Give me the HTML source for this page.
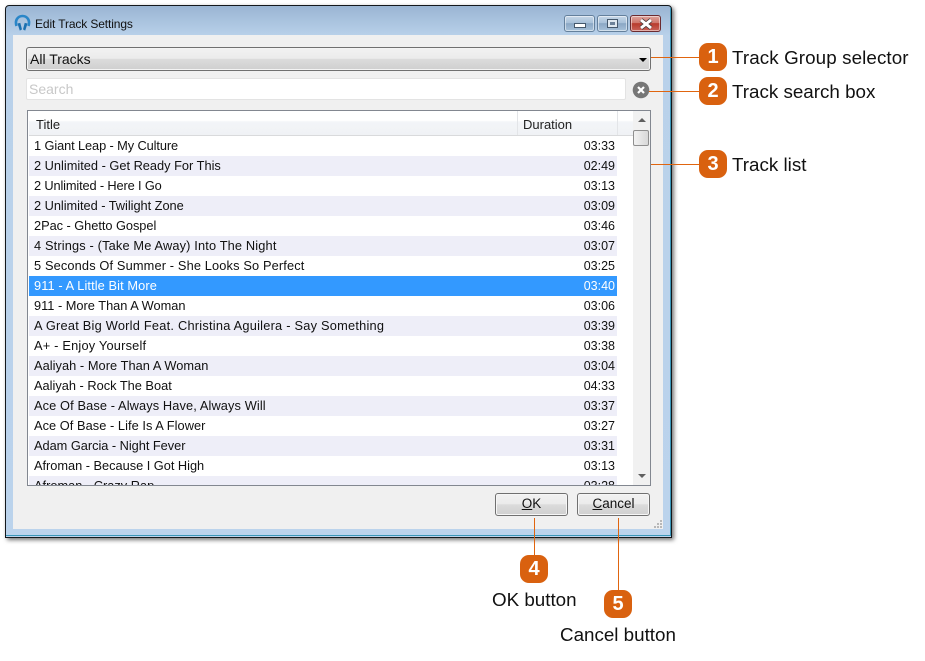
<!DOCTYPE html>
<html><head><meta charset="utf-8"><style>
html,body{margin:0;padding:0;background:#fff}
body{width:925px;height:661px;position:relative;overflow:hidden;font-family:"Liberation Sans",sans-serif;color:#000}
div{position:absolute;box-sizing:border-box}
#win{left:5px;top:5px;width:667px;height:533px;background:linear-gradient(#9ab5d3 0,#b9d1ea 30px,#bbd3ec 100%);border:1px solid #14181c;border-radius:4px 4px 0 0;box-shadow:2px 2px 4px rgba(0,0,0,.55)}
#edge{left:670px;top:8px;width:1px;height:528px;background:#3a96b8}
#edge2{left:6px;top:535px;width:665px;height:1px;background:#3a96b8}
#content{left:13px;top:35px;width:650px;height:494px;background:#f0f0f0}
#title{left:35px;top:16px;font-size:12px;line-height:16px;color:#111;letter-spacing:-.12px}
.wb{top:15px;width:31px;height:17px;border:1px solid #64809c;border-radius:3px;background:linear-gradient(#c6d7e8 0,#a9c1d9 45%,#8aa7c4 50%,#a7c1da 100%);box-shadow:inset 0 0 0 1px rgba(255,255,255,.5)}
#combo{left:26px;top:47px;width:625px;height:24px;border:1px solid #707070;border-radius:3px;background:linear-gradient(#f2f2f2 0,#ebebeb 48%,#dcdcdc 50%,#cfcfcf 100%);box-shadow:inset 0 0 0 1px #f4f4f4}
#combot{left:30px;top:51px;font-size:14px;line-height:16px;color:#111}
#arrow{left:639px;top:58px;width:0;height:0;border-left:4px solid transparent;border-right:4px solid transparent;border-top:4px solid #000}
#search{left:26px;top:78px;width:600px;height:22px;background:#fff;border:1px solid #e3e3e3;border-radius:2px}
#searcht{left:29px;top:81px;font-size:14px;line-height:16px;color:#c8c8c8}
#list{left:27px;top:110px;width:624px;height:376px;background:#fff;border:1px solid #828790;overflow:hidden}
#head{left:1px;top:0;width:605px;height:25px;background:linear-gradient(#fff 0,#fff 40%,#f3f5f8 45%,#f0f2f5 100%);border-bottom:1px solid #d9dadc}
.sep{top:0;width:1px;height:24px;background:#e3e5e8}
.ht{top:6px;font-size:13px;line-height:15px;color:#222}
.r{left:1px;width:588px;height:20px;font-size:12.8px;line-height:19px;color:#111;padding-left:5px;white-space:nowrap}
.r b{font-weight:normal;position:absolute;right:2px;top:1px;font-size:12.5px;letter-spacing:0}
.a{background:#eeeef8}
.s{background:#3399ff;color:#fff}
#sb{left:605px;top:0;width:17px;height:374px;background:#f1f1f1}
#thumb{left:605px;top:19px;width:16px;height:16px;border:1px solid #8f8f8f;border-radius:2px;background:linear-gradient(90deg,#f2f2f2,#d8d8d8)}
.tri{width:0;height:0;left:610px;border-left:4px solid transparent;border-right:4px solid transparent}
.btn{top:493px;width:73px;height:23px;border:1px solid #707070;border-radius:3px;background:linear-gradient(#f2f2f2 0,#ebebeb 48%,#dcdcdc 50%,#cfcfcf 100%);box-shadow:inset 0 0 0 1px #f6f6f6;font-size:13.5px;line-height:20px;text-align:center;color:#111}
.ln{background:#e0650f}
.bd{width:28px;height:28px;border-radius:9px;background:#d9610f;color:#fff;font-weight:bold;font-size:20px;line-height:28px;text-align:center}
.lb{font-size:18.8px;line-height:22px;color:#111;white-space:nowrap}
.grip{width:2px;height:2px;background:#b8b8b8}
</style></head><body>
<div id="win"></div><div id="edge"></div><div id="edge2"></div>
<svg style="position:absolute;left:14px;top:14px" width="18" height="18" viewBox="0 0 18 18"><path d="M2.500 12C0.500 5.500 4.500 2 8.500 2S16.500 5.500 14.500 12" fill="none" stroke="#2a86c8" stroke-width="2.600"/><path d="M3.500 9.500l2.800-.6 1.700 6.500-2.200 1.200zM13.500 9.500l-2.800-.6-1.700 6.500 2.200 1.200z" fill="#1b70b0"/></svg>
<div id="title">Edit Track Settings</div>
<div class="wb" style="left:564px"><div style="left:9px;top:7px;width:12px;height:5px;background:#fff;border:1px solid #45586c"></div></div>
<div class="wb" style="left:597px"><div style="left:9px;top:3px;width:11px;height:9px;background:#dfe8f0;border:1px solid #45586c"><div style="left:2px;top:2px;width:5px;height:3px;background:#6d8299"></div></div></div>
<div class="wb" style="left:630px;border-color:#6b2b30;background:linear-gradient(#dea39c 0,#d0776c 45%,#b83a2c 50%,#c9635a 100%)"><svg style="position:absolute;left:8px;top:2px" width="14" height="12" viewBox="0 0 14 12"><path d="M2 2l10 8M12 2l-10 8" stroke="#4a3a3a" stroke-width="4.600"/><path d="M2 2l10 8M12 2l-10 8" stroke="#fff" stroke-width="3"/></svg></div>
<div id="content"></div>
<div id="combo"></div><div id="combot">All Tracks</div><div id="arrow"></div>
<div id="search"></div><div id="searcht">Search</div>
<svg style="position:absolute;left:632px;top:81px" width="18" height="18" viewBox="0 0 18 18"><circle cx="9" cy="9" r="8.300" fill="#777"/><path d="M6 6l6 6M12 6l-6 6" stroke="#fff" stroke-width="2.200"/></svg>
<div id="list">
<div id="head"></div><div class="sep" style="left:489px"></div><div class="sep" style="left:589px"></div>
<div class="ht" style="left:8px">Title</div><div class="ht" style="left:495px">Duration</div>
<div id="sb"></div><div id="thumb"></div>
<div class="tri" style="top:7px;border-bottom:4px solid #606060"></div>
<div class="tri" style="top:363px;border-top:4px solid #606060"></div>
<div class="r" style="top:25px;letter-spacing:-.1px">1 Giant Leap - My Culture<b>03:33</b></div>
<div class="r a" style="top:45px">2 Unlimited - Get Ready For This<b>02:49</b></div>
<div class="r" style="top:65px;letter-spacing:-.14px">2 Unlimited - Here I Go<b>03:13</b></div>
<div class="r a" style="top:85px;letter-spacing:-.03px">2 Unlimited - Twilight Zone<b>03:09</b></div>
<div class="r" style="top:105px;letter-spacing:-.04px">2Pac - Ghetto Gospel<b>03:46</b></div>
<div class="r a" style="top:125px;letter-spacing:.15px">4 Strings - (Take Me Away) Into The Night<b>03:07</b></div>
<div class="r" style="top:145px;letter-spacing:.14px">5 Seconds Of Summer - She Looks So Perfect<b>03:25</b></div>
<div class="r s" style="top:165px;letter-spacing:.1px">911 - A Little Bit More<b>03:40</b></div>
<div class="r" style="top:185px">911 - More Than A Woman<b>03:06</b></div>
<div class="r a" style="top:205px;letter-spacing:.23px">A Great Big World Feat. Christina Aguilera - Say Something<b>03:39</b></div>
<div class="r" style="top:225px;letter-spacing:.2px">A+ - Enjoy Yourself<b>03:38</b></div>
<div class="r a" style="top:245px;letter-spacing:.05px">Aaliyah - More Than A Woman<b>03:04</b></div>
<div class="r" style="top:265px">Aaliyah - Rock The Boat<b>04:33</b></div>
<div class="r a" style="top:285px;letter-spacing:.11px">Ace Of Base - Always Have, Always Will<b>03:37</b></div>
<div class="r" style="top:305px;letter-spacing:.05px">Ace Of Base - Life Is A Flower<b>03:27</b></div>
<div class="r a" style="top:325px;letter-spacing:-.03px">Adam Garcia - Night Fever<b>03:31</b></div>
<div class="r" style="top:345px;letter-spacing:-.02px">Afroman - Because I Got High<b>03:13</b></div>
<div class="r a" style="top:365px">Afroman - Crazy Rap<b>03:28</b></div>
</div>
<div class="btn" style="left:495px"><u>O</u>K</div>
<div class="btn" style="left:577px"><u>C</u>ancel</div>
<div class="grip" style="left:660px;top:520px"></div><div class="grip" style="left:657px;top:523px"></div><div class="grip" style="left:660px;top:523px"></div><div class="grip" style="left:654px;top:526px"></div><div class="grip" style="left:657px;top:526px"></div><div class="grip" style="left:660px;top:526px"></div>

<div class="ln" style="left:651px;top:57px;width:50px;height:1px"></div>
<div class="ln" style="left:649px;top:91px;width:52px;height:1px"></div>
<div class="ln" style="left:651px;top:164px;width:50px;height:1px"></div>
<div class="ln" style="left:534px;top:518px;width:1px;height:40px"></div>
<div class="ln" style="left:618px;top:518px;width:1px;height:75px"></div>
<div class="bd" style="left:699px;top:43px">1</div>
<div class="bd" style="left:699px;top:77px">2</div>
<div class="bd" style="left:699px;top:150px">3</div>
<div class="bd" style="left:520px;top:555px">4</div>
<div class="bd" style="left:604px;top:590px">5</div>
<div class="lb" style="left:732px;top:47px;letter-spacing:.1px">Track Group selector</div>
<div class="lb" style="left:732px;top:81px">Track search box</div>
<div class="lb" style="left:732px;top:154px">Track list</div>
<div class="lb" style="left:492px;top:589px">OK button</div>
<div class="lb" style="left:560px;top:624px">Cancel button</div>
</body></html>
